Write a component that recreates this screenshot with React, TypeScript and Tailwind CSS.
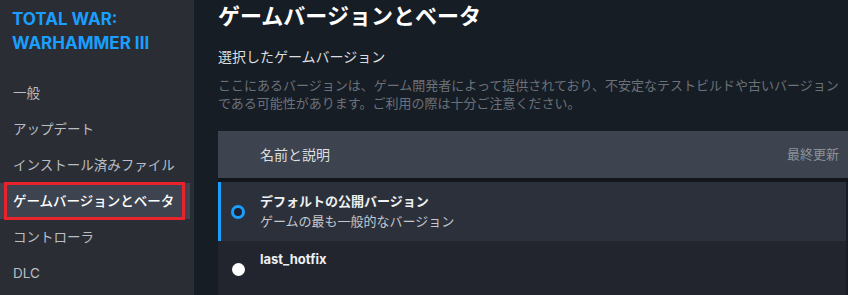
const font = { fontFamily: '"Inter", "Noto Sans CJK JP", sans-serif' };

const navItems = [
  "一般",
  "アップデート",
  "インストール済みファイル",
  "ゲームバージョンとベータ",
  "コントローラ",
  "DLC",
];

const SELECTED = "ゲームバージョンとベータ";

function Sidebar() {
  return (
    <aside className="w-[194px] shrink-0 bg-[#2a2d34] flex flex-col">
      <div className="pt-[7px] pl-[12px] text-[17px] leading-[24px] font-bold text-[#1a9fff]">
        <div>TOTAL WAR:</div>
        <div>WARHAMMER III</div>
      </div>
      <nav className="mt-[20px] flex flex-col mr-[4px]">
        {navItems.map((item) => {
          const active = item === SELECTED;
          return (
            <div
              key={item}
              className={`relative h-[36px] flex items-center pl-[13px] text-[13.5px] ${
                active ? "bg-[#3d4450] text-white font-medium" : "text-[#b9bdc3]"
              }`}
            >
              {item}
              {active && (
                <div className="absolute left-[4px] top-[-1px] w-[181px] h-[38px] border-[3px] border-[#e8232b]" />
              )}
            </div>
          );
        })}
      </nav>
    </aside>
  );
}

function Radio({ checked }: { checked: boolean }) {
  return checked ? (
    <span className="block shrink-0 w-[14px] h-[14px] rounded-full border-[3px] border-[#1a9fff] bg-[#1b2130]" />
  ) : (
    <span className="block shrink-0 w-[13px] h-[13px] rounded-full bg-white" />
  );
}

export default function App() {
  return (
    <div className="flex w-[848px] h-[295px] overflow-hidden bg-[#171d25]" style={font}>
      <Sidebar />
      <main className="flex-1 pl-[24px] min-w-0">
        <h1 className="pt-[1px] text-[22px] leading-[30px] font-bold text-white">
          ゲームバージョンとベータ
        </h1>
        <h2 className="mt-[16px] text-[14px] leading-[20px] text-[#dcdedf]">
          選択したゲームバージョン
        </h2>
        <p className="mt-[9px] text-[13px] leading-[18px] text-[#6b7179] whitespace-nowrap">
          <span className="block">
            ここにあるバージョンは、ゲーム開発者によって提供されており、不安定なテストビルドや古いバージョン
          </span>
          <span className="block">
            である可能性があります。ご利用の際は十分ご注意ください。
          </span>
        </p>

        <div className="mt-[19px] w-[630px]">
          <div className="h-[47px] bg-[#3d4450] flex items-center justify-between pl-[42px] pr-[9px]">
            <span className="text-[14px] text-[#dcdedf]">名前と説明</span>
            <span className="text-[13px] text-[#8b929a]">最終更新</span>
          </div>
          <div className="h-[4px] bg-[#12161c]" />
          <div className="w-[628px]">
            <div className="h-[59px] bg-[#2c303a] border-l-[3px] border-[#1a9fff] flex items-center pl-[10px]">
              <Radio checked />
              <div className="ml-[15px] self-start pt-[9px]">
                <div className="text-[13px] leading-[20px] font-bold text-[#eef0f2]">
                  デフォルトの公開バージョン
                </div>
                <div className="text-[13px] leading-[20px] text-[#c3c8ce]">
                  ゲームの最も一般的なバージョン
                </div>
              </div>
            </div>
            <div className="h-[56px] bg-[#22252d] flex items-center pl-[14px]">
              <Radio checked={false} />
              <div className="ml-[15px] self-start pt-[8px]">
                <div className="text-[13px] leading-[20px] font-bold text-[#eef0f2]">
                  last_hotfix
                </div>
              </div>
            </div>
          </div>
        </div>
      </main>
    </div>
  );
}
